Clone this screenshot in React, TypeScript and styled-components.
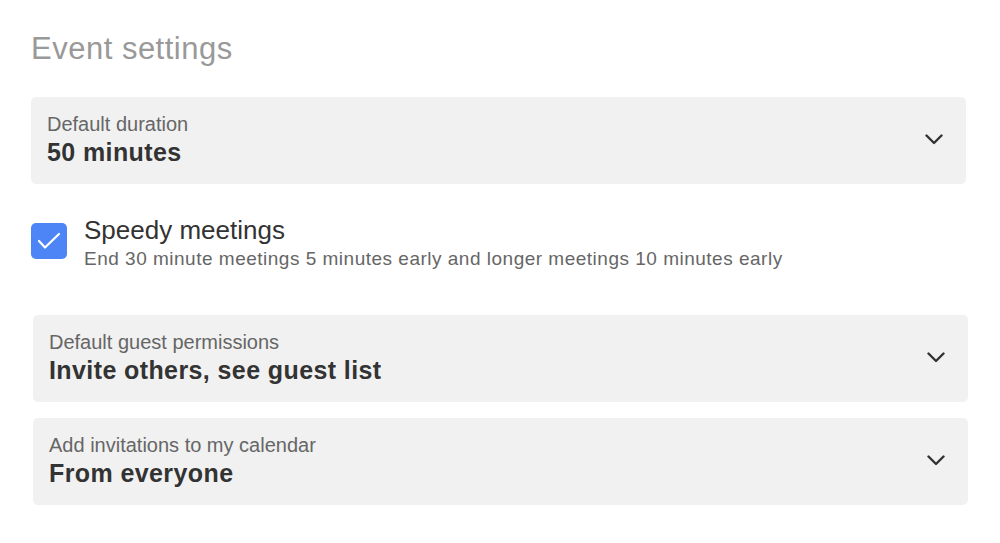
import React from "react";
import styled, { createGlobalStyle } from "styled-components";

const Global = createGlobalStyle`
  html, body { margin: 0; padding: 0; background: #fff; }
  body { font-family: "Liberation Sans", Arial, Helvetica, sans-serif; }
  * { box-sizing: border-box; }
`;

const Page = styled.div`
  display: flex;
  flex-direction: column;
  padding: 32px 0 0 31px;
  width: 1000px;
`;

const Title = styled.h1`
  margin: 0;
  font-size: 31px;
  line-height: 34px;
  letter-spacing: 0.5px;
  font-weight: 400;
  color: #999999;
`;

const Card = styled.div<{ $indent?: number; $top: number }>`
  display: flex;
  align-items: center;
  justify-content: space-between;
  width: 935px;
  height: 87px;
  margin-top: ${(p) => p.$top}px;
  margin-left: ${(p) => p.$indent ?? 0}px;
  padding: 0 23px 3px 16px;
  background: #f1f1f1;
  border-radius: 5px;
`;

const CardText = styled.div`
  display: flex;
  flex-direction: column;
  gap: 2px;
`;

const Label = styled.div`
  font-size: 20px;
  line-height: 24px;
  color: #666666;
`;

const Value = styled.div`
  font-size: 25px;
  line-height: 28px;
  letter-spacing: 0.4px;
  font-weight: 700;
  color: #333333;
`;

const Row = styled.div`
  display: flex;
  align-items: flex-start;
  gap: 17px;
  margin-top: 31px;
`;

const Box = styled.div`
  width: 36px;
  height: 36px;
  margin-top: 8px;
  border-radius: 5px;
  background: #4e85f6;
  flex-shrink: 0;
`;

const RowText = styled.div`
  display: flex;
  flex-direction: column;
  gap: 3px;
`;

const RowTitle = styled.div`
  font-size: 26px;
  line-height: 30px;
  color: #333333;
`;

const RowDesc = styled.div`
  font-size: 19px;
  line-height: 22px;
  letter-spacing: 0.5px;
  color: #666666;
`;

const Chevron = () => (
  <svg width="18" height="11" viewBox="0 0 18 11" fill="none">
    <polyline points="1.5,1.5 9,9 16.5,1.5" stroke="#333" strokeWidth="2.4" strokeLinecap="round" strokeLinejoin="round" />
  </svg>
);

const Check = () => (
  <svg width="36" height="36" viewBox="0 0 36 36" fill="none">
    <polyline points="8,18 14,24.5 28,11" stroke="#fff" strokeWidth="2.2" strokeLinecap="round" strokeLinejoin="round" />
  </svg>
);

const Select = ({ label, value, indent, top }: { label: string; value: string; indent?: number; top: number }) => (
  <Card $indent={indent} $top={top}>
    <CardText>
      <Label>{label}</Label>
      <Value>{value}</Value>
    </CardText>
    <Chevron />
  </Card>
);

export default function App() {
  return (
    <>
      <Global />
      <Page>
        <Title>Event settings</Title>
        <Select top={31} label="Default duration" value="50 minutes" />
        <Row>
          <Box>
            <Check />
          </Box>
          <RowText>
            <RowTitle>Speedy meetings</RowTitle>
            <RowDesc>End 30 minute meetings 5 minutes early and longer meetings 10 minutes early</RowDesc>
          </RowText>
        </Row>
        <Select top={45} indent={2} label="Default guest permissions" value="Invite others, see guest list" />
        <Select top={16} indent={2} label="Add invitations to my calendar" value="From everyone" />
      </Page>
    </>
  );
}
